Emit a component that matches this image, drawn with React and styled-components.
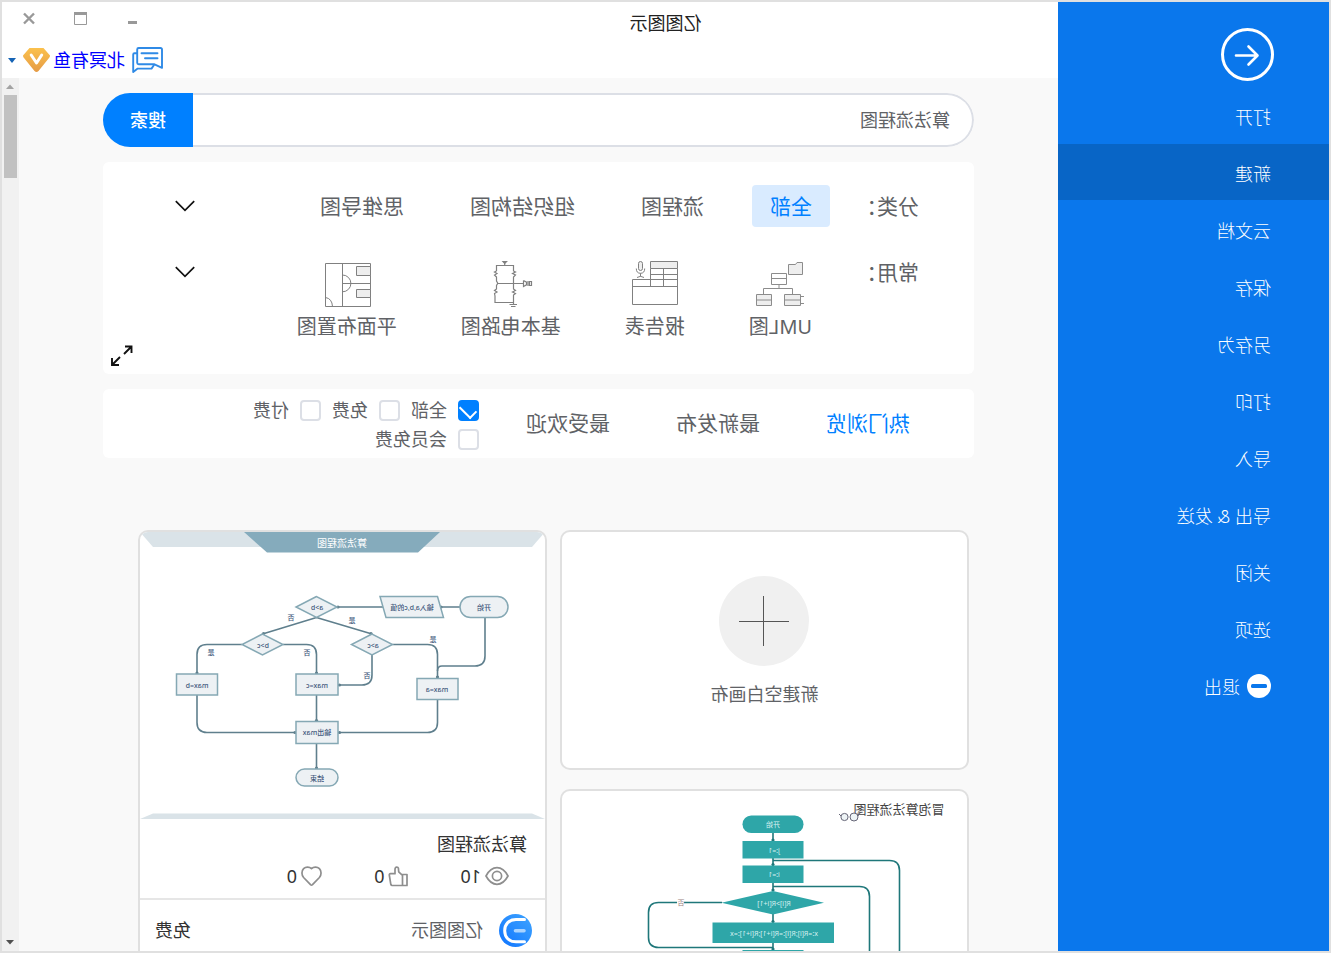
import React, { useState } from "react";
import styled, { createGlobalStyle, css } from "styled-components";

const GlobalStyle = createGlobalStyle`
  * {
    box-sizing: border-box;
  }
  body {
    margin: 0;
    font-family: "Noto Sans", "Noto Sans CJK SC", sans-serif;
    font-size: 18px;
    line-height: 24px;
    color: #606266;
  }
  button, input {
    font: inherit;
    color: inherit;
    margin: 0;
  }
  button {
    padding: 0;
    border: 0;
    background: none;
    cursor: pointer;
  }
  svg {
    display: block;
  }
`;

// the whole window is flipped horizontally
const Window = styled.div`
  display: flex;
  height: 100vh;
  border: 2px solid #e0e0e0;
  background: #ffffff;
  overflow: hidden;
  transform: scaleX(-1);
`;

/* ---------- sidebar ---------- */

const Sidebar = styled.aside`
  flex: 0 0 271px;
  padding-top: 26px;
  background: #0a77ec;
  color: #ffffff;
`;

const BackButton = styled.button`
  display: block;
  margin: 0 0 6px 55px;
`;

const Menu = styled.nav`
  display: flex;
  flex-direction: column;
  gap: 1px;
`;

const MenuItem = styled.button`
  display: flex;
  align-items: center;
  gap: 7px;
  width: 100%;
  height: 56px;
  padding: 4px 0 0 58px;
  color: #ffffff;
  font-weight: 300;
  background: ${(props) => (props.$active ? "#0865c6" : "transparent")};
`;

/* ---------- header ---------- */

const Main = styled.div`
  flex: 1;
  min-width: 0;
  display: flex;
  flex-direction: column;
`;

const TitleBar = styled.header`
  display: grid;
  grid-template-columns: 1fr 271px;
  height: 36px;
`;

const Title = styled.h1`
  margin: 0;
  padding-top: 9px;
  font-size: 18px;
  font-weight: 400;
  line-height: 24px;
  text-align: center;
  color: #222222;
`;

const WindowButtons = styled.div`
  display: flex;
  justify-content: flex-end;
  align-items: center;
  padding: 0 1px 3px 0;
`;

const WindowButton = styled.button`
  display: flex;
  justify-content: center;
  width: 52px;
`;

const UserBar = styled.div`
  display: flex;
  align-items: center;
  justify-content: flex-end;
  gap: 7px;
  height: 40px;
  padding: 4px 6px 0 0;
`;

const UserLink = styled.a`
  display: flex;
  align-items: center;
  gap: 3px;
  color: #0000ff;
  text-decoration: none;
`;

/* ---------- body ---------- */

const Body = styled.div`
  flex: 1;
  min-height: 0;
  display: flex;
  background: #f9f9f9;
`;

const Scroller = styled.main`
  flex: 1;
  min-width: 0;
  overflow-y: auto;
  scrollbar-width: none;
  padding: 15px 84px 0;
`;

const ScrollBar = styled.div`
  display: flex;
  flex-direction: column;
  align-items: center;
  width: 17px;
  background: #f1f1f1;
`;

const ScrollArrow = styled.button`
  display: flex;
  align-items: center;
  justify-content: center;
  width: 17px;
  height: 17px;
`;

const ScrollTrack = styled.div`
  flex: 1;
`;

const ScrollThumb = styled.div`
  width: 13px;
  height: 83px;
  background: #c1c1c1;
`;

const SearchForm = styled.form`
  display: flex;
  height: 54px;
  border-radius: 27px;
  overflow: hidden;
`;

const SearchInput = styled.input`
  flex: 1;
  min-width: 0;
  padding: 0 22px;
  border: 2px solid #dcdfe6;
  border-right: 0;
  border-radius: 27px 0 0 27px;
  background: #ffffff;
  outline: none;
`;

const SearchButton = styled.button`
  width: 90px;
  color: #ffffff;
  font-weight: 500;
  background: #0080ff;
`;

const Panel = styled.section`
  margin-top: 15px;
  border-radius: 6px;
  background: #ffffff;
`;

const FilterPanel = styled(Panel)`
  padding: 23px 0 8px 55px;
`;

const FilterRow = styled.div`
  display: flex;
  align-items: ${(props) => (props.$top ? "flex-start" : "center")};
  margin-bottom: ${(props) => (props.$top ? "5px" : "33px")};
`;

const FilterLabel = styled.span`
  width: 89px;
  font-size: 21px;
  white-space: nowrap;
`;

const FilterList = styled.div`
  flex: 1;
  display: flex;
  gap: ${(props) => props.$gap};
`;

const Chip = styled.button`
  height: 42px;
  padding: 0 18px;
  border-radius: 4px;
  font-size: 21px;
  ${(props) =>
    props.$active &&
    css`
      color: #0080ff;
      background: #d9ebff;
    `}
`;

const Shortcut = styled.button`
  display: flex;
  flex-direction: column;
  align-items: center;
  gap: 6px;
  padding: 0 18px;
  font-size: 20px;
  line-height: 26px;
`;

const MoreButton = styled.button`
  margin-right: 72px;
  padding: 6px 0;
`;

const ExpandRow = styled.div`
  display: flex;
  justify-content: flex-end;
  padding-right: 8px;
`;

const SortPanel = styled(Panel)`
  display: flex;
  align-items: center;
  height: 69px;
  padding-left: 64px;
`;

const SortTabs = styled.div`
  display: flex;
  gap: 66px;
  padding-bottom: 2px;
`;

const SortTab = styled.button`
  font-size: 21px;
  color: ${(props) => (props.$active ? "#0080ff" : "inherit")};
`;

const Checks = styled.div`
  display: flex;
  flex-wrap: wrap;
  gap: 8px 11px;
  width: 236px;
  margin-left: 47px;
  padding-top: 2px;
`;

const CheckLabel = styled.label`
  display: flex;
  align-items: center;
  gap: 11px;
  height: 21px;
`;

const CheckBox = styled.input`
  appearance: none;
  display: grid;
  place-items: center;
  width: 21px;
  height: 21px;
  border: 2px solid #dcdfe6;
  border-radius: 4px;
  background: #ffffff;

  &:checked {
    border-color: #0080ff;
    background: #0080ff;
  }
  &:checked::after {
    content: "";
    width: 8px;
    height: 14px;
    margin-bottom: 5px;
    border: solid #ffffff;
    border-width: 0 2px 2px 0;
    transform: rotate(45deg);
  }
`;

/* ---------- templates ---------- */

const Templates = styled.div`
  display: grid;
  grid-template-columns: 1fr 1fr;
  align-items: start;
  gap: 13px;
  margin-top: 72px;
  padding: 0 35px 0 5px;
`;

const Column = styled.div`
  display: flex;
  flex-direction: column;
  gap: 19px;
`;

const Card = styled.article`
  border: 2px solid #e0e0e0;
  border-radius: 10px;
  background: #ffffff;
  overflow: hidden;
`;

const BlankCard = styled.button`
  display: flex;
  flex-direction: column;
  align-items: center;
  gap: 16px;
  height: 240px;
  padding-top: 44px;
  border: 2px solid #e0e0e0;
  border-radius: 10px;
  background: #ffffff;
`;

const PlusCircle = styled.span`
  display: flex;
  align-items: center;
  justify-content: center;
  width: 90px;
  height: 90px;
  border-radius: 50%;
  background: #f0f0f0;
`;

const CardInfo = styled.div`
  padding: 13px 18px 10px;
  border-bottom: 2px solid #e6e6e6;
  color: #333333;
`;

const CardTitle = styled.h2`
  margin: 0 0 8px;
  font-size: 18px;
  font-weight: 400;
  line-height: 24px;
`;

const Stats = styled.div`
  display: flex;
  gap: 52px;
  padding-left: 18px;
`;

const Stat = styled.span`
  display: flex;
  align-items: center;
  gap: 4px;
  height: 24px;
`;

const CardFooter = styled.div`
  display: flex;
  align-items: center;
  gap: 16px;
  height: 60px;
  padding: 0 15px 0 13px;
`;

const Price = styled.span`
  margin-left: auto;
  color: #333333;
`;

const menu = [
  "打开",
  "新建",
  "云文档",
  "保存",
  "另存为",
  "打印",
  "导入",
  "导出 & 发送",
  "关闭",
  "选项",
  "退出",
];
const categories = ["全部", "流程图", "组织结构图", "思维导图"];
const sorts = ["热门浏览", "最新发布", "最受欢迎"];
const prices = ["全部", "免费", "付费", "会员免费"];

/* ---------- icons ---------- */

const BackIcon = () => (
  <svg width="53" height="53" fill="none" stroke="#fff">
    <circle cx="26.5" cy="26.5" r="25" strokeWidth="3" />
    <path
      d="M38 27.5H17M25.5 18.5L16.5 27.5L25.5 36.5"
      strokeWidth="2.6"
      strokeLinecap="round"
      strokeLinejoin="round"
    />
  </svg>
);

const ExitIcon = () => (
  <svg width="24" height="26">
    <circle cx="12" cy="12" r="12" fill="#fff" />
    <rect x="4" y="10" width="16" height="4" rx="1.5" fill="#0a77ec" />
  </svg>
);

const ChatIcon = () => (
  <svg
    width="31"
    height="27"
    fill="none"
    stroke="#2f8ae6"
    strokeWidth="1.9"
    strokeLinejoin="round"
    strokeLinecap="round"
  >
    <path d="M2.5 1H24.3Q25.8 1 25.8 2.5V15.7Q25.8 17.2 24.3 17.2H9L1 20.8V2.5Q1 1 2.5 1Z" />
    <path d="M5.5 6.3H21.5M5.5 11.2H18" />
    <path d="M26 6.3H28.5Q29.8 6.3 29.8 7.6V25L25.3 21.6H11.5L9 18" />
  </svg>
);

const VipIcon = () => (
  <svg width="27" height="25">
    <defs>
      <linearGradient id="vip" x1="0" y1="0" x2="0" y2="1">
        <stop offset="0" stopColor="#fbc14d" />
        <stop offset="1" stopColor="#e59b45" />
      </linearGradient>
    </defs>
    <path
      d="M6.5 0H20.5L27 7.5Q27 9 26 10L15.5 23Q13.5 25 11.5 23L1 10Q0 9 0 7.5Z"
      fill="url(#vip)"
    />
    <path
      d="M8.3 7L13.5 15L18.8 7"
      fill="none"
      stroke="#fff"
      strokeWidth="3"
      strokeLinecap="round"
      strokeLinejoin="round"
    />
  </svg>
);

const Chevron = () => (
  <svg width="20" height="12" fill="none" stroke="#111" strokeWidth="1.7">
    <path d="M0.8 1.2L10 10.4L19.2 1.2" />
  </svg>
);

const ExpandIcon = () => (
  <svg width="22" height="21" fill="none" stroke="#111" strokeWidth="1.9">
    <path d="M1.5 8V1.5H8M1.5 1.5L9 9M21 13V20H14M21 20L13 12" />
  </svg>
);

const UmlIcon = () => (
  <svg width="50" height="48" fill="none" stroke="#8c8c8c">
    <path d="M2.5 14.5V2.5H8L9.5 4.5H16.5V14.5Z" fill="#eee" />
    <path d="M18.5 13.5H33.5V24.5H18.5ZM18.5 18.5H33.5" />
    <path d="M26 24.5V28.5M12.5 34.5V28.5H41.5V34.5M1 36.5H4.5M1 43.5H4.5" />
    <path d="M4.5 34.5H20.5V45.5H4.5ZM33.5 34.5H48.5V45.5H33.5Z" fill="#eee" />
    <path d="M4.5 40H20.5M33.5 40H48.5" />
  </svg>
);

const ReportIcon = () => (
  <svg width="50" height="48" fill="none" stroke="#808080">
    <path d="M2.5 1.5H29.5V8.5H2.5Z" fill="#eee" />
    <path d="M2.5 8.5V26.5M29.5 8.5V26.5M16.5 8.5V26.5M2.5 14.5H29.5" />
    <path d="M2.5 19.5H47.5V44.5H2.5ZM2.5 26.5H47.5" />
    <rect x="37.5" y="1.5" width="4" height="9" rx="2" fill="#eee" />
    <path d="M35.3 8.5Q35.3 13.3 39.5 13.3Q43.7 13.3 43.7 8.5M39.5 13.3V16.5M36 17.5L39.5 16.3L43 17.5" />
  </svg>
);

const CircuitIcon = () => (
  <svg width="50" height="48" fill="none" stroke="#808080" strokeWidth="1.2">
    <path d="M29.5 1.7H33L31.3 3.5Z" fill="#808080" />
    <path d="M31.3 3V5.5M39.5 11V5.5H22.5V11L20.5 12L23.5 13.5L20.5 15L22.5 17V29L20.5 30.5L23.5 32L20.5 33.5L22.5 35V44" />
    <path d="M39.5 11L41.5 12L39 13.5L41.5 15L39.5 17V21L38.2 23.3L39.5 25.5V29L41.5 30.5L39 32L41.5 33.5L41 36V42.5H22.5" />
    <path d="M39 23.5H12.5M12.5 20.5V26.5L9.5 24.8V22.2L12.5 20.5M8 21V26M4.5 21.5V25.5H6.5V21.5ZM19 44.5H26.5M20.5 46.5H25" />
  </svg>
);

const FloorIcon = () => (
  <svg width="50" height="48" fill="none" stroke="#808080">
    <path d="M1.5 3.5H46.5V46.5H1.5ZM29.5 3.5V46.5M1.5 23.5H29.5" />
    <path d="M1.5 6.5H15.5V15.5H1.5ZM1.5 29.5H15.5V37.5H1.5Z" fill="#eee" />
    <path d="M29.5 15A8.3 8.3 0 0 0 29.5 31.8M46.5 37.5Q40 38.5 39.5 46.5" />
  </svg>
);

const EyeIcon = () => (
  <svg width="24" height="20" fill="none" stroke="#8e8e8e" strokeWidth="1.7">
    <path d="M1 10Q5.5 1.7 12 1.7T23 10Q18.5 18.3 12 18.3T1 10Z" />
    <circle cx="12" cy="10" r="4.6" />
  </svg>
);

const LikeIcon = () => (
  <svg
    width="20"
    height="21"
    fill="none"
    stroke="#8e8e8e"
    strokeWidth="1.7"
    strokeLinejoin="round"
  >
    <path d="M1 8.5H5.5V19.5H1ZM5.5 9.3L9.3 5.8L9.6 2.3Q9.9 1 11.2 1Q13 1.3 13 3.5V7.7H17.5Q18.8 7.8 18.7 9L17.2 18.3Q16.9 19.5 15.8 19.5H5.5" />
  </svg>
);

const HeartIcon = () => (
  <svg
    width="21"
    height="20"
    fill="none"
    stroke="#8e8e8e"
    strokeWidth="1.7"
    strokeLinejoin="round"
  >
    <path d="M10.5 2.6C8.5 0.7 4.8 0.4 2.6 2.7C0.4 5 0.4 8.8 2.6 11.5L9.5 18.6Q10.5 19.5 11.5 18.6L18.4 11.5C20.6 8.8 20.6 5 18.4 2.7C16.2 0.4 12.5 0.7 10.5 2.6Z" />
  </svg>
);

const EdrawLogo = () => (
  <svg width="33" height="33" fill="none" strokeLinecap="round">
    <defs>
      <linearGradient id="edraw" x1="0" y1="0" x2="1" y2="1">
        <stop offset="0" stopColor="#3fa5ff" />
        <stop offset="1" stopColor="#0f74ff" />
      </linearGradient>
    </defs>
    <circle cx="16.5" cy="16.5" r="16.5" fill="url(#edraw)" />
    <path
      d="M7.5 5.5H16C23 5.5 27.3 10.2 27.3 16.7S23 27.8 16 27.8H7.5"
      stroke="#fff"
      strokeWidth="3"
    />
    <path d="M8 16.8H16.5" stroke="#a9d3ff" strokeWidth="3.6" />
  </svg>
);

const shortcuts = [
  { text: "UML图", icon: <UmlIcon /> },
  { text: "报告表", icon: <ReportIcon /> },
  { text: "基本电路图", icon: <CircuitIcon /> },
  { text: "平面布置图", icon: <FloorIcon /> },
];

/* ---------- thumbnails ---------- */

const Thumb = styled.svg`
  width: 100%;
  height: auto;

  text {
    font-size: 7px;
    text-anchor: middle;
    dominant-baseline: central;
  }
`;

const ThumbTitle = styled.text`
  && {
    font-size: ${(props) => props.$size};
  }
`;

const AlgorithmThumb = () => (
  <Thumb viewBox="0 0 405 287">
    <path d="M0 0H405L392 15H13Z" fill="#dae3e8" />
    <path d="M105 0H301L278 20.5H127Z" fill="#85abbc" />
    <ThumbTitle x="203" y="11" fill="#fff" $size="10px">
      算法流程图
    </ThumbTitle>
    <path d="M0 287L13 281.5H392L405 287Z" fill="#dae3e8" />
    <g fill="none" stroke="#5f7f8d" strokeWidth="1.6">
      <path d="M85 75H104M162 75H208" />
      <path d="M228.5 85.5L282.5 102M228.5 85.5L173 102" />
      <path d="M60 85V124Q60 134 70 134H103Q107.5 134 107.5 139" />
      <path d="M152.5 112.5H117.5Q107.5 112.5 107.5 122.5V146" />
      <path d="M173 123V143Q173 153 183 153H206.5" />
      <path d="M262 112.5H238.5Q228.5 112.5 228.5 122.5V142" />
      <path d="M303 112.5H338Q348 112.5 348 122.5V142" />
      <path d="M348 163V190.5Q348 200.5 338 200.5H249" />
      <path d="M107.5 167V190.5Q107.5 200.5 117.5 200.5H206.5" />
      <path d="M228.5 163V189.5M228.5 212V237" />
    </g>
    <g fill="#5f7f8d">
      <circle cx="104" cy="75" r="1.6" />
      <circle cx="207" cy="75" r="1.6" />
      <circle cx="281.5" cy="101.5" r="1.6" />
      <circle cx="174" cy="101.5" r="1.6" />
      <circle cx="107.5" cy="145" r="1.6" />
      <circle cx="205.5" cy="153" r="1.6" />
      <circle cx="228.5" cy="141" r="1.6" />
      <circle cx="348" cy="141" r="1.6" />
      <circle cx="250" cy="200.5" r="1.6" />
      <circle cx="205.5" cy="200.5" r="1.6" />
      <circle cx="228.5" cy="188.5" r="1.6" />
      <circle cx="228.5" cy="236" r="1.6" />
    </g>
    <g fill="#edf1f4" stroke="#85a8b4" strokeWidth="1.5">
      <rect x="37" y="64.5" width="48" height="21" rx="10.5" />
      <path d="M107.5 64.5H165L159 85.5H101.5Z" />
      <path d="M228.5 64.5L249 75L228.5 85.5L208 75Z" />
      <path d="M173 102L193.5 112.5L173 123L152.5 112.5Z" />
      <path d="M282.5 102L303 112.5L282.5 123L262 112.5Z" />
      <rect x="327.5" y="142" width="41" height="21" />
      <rect x="207" y="142" width="42" height="21" />
      <rect x="87" y="146.5" width="41" height="21" />
      <rect x="207" y="189.5" width="42" height="22" />
      <rect x="207" y="237" width="42" height="17" rx="8.5" />
    </g>
    <g fill="#3f587c" fontWeight="500">
      <text x="61" y="75">开始</text>
      <text x="133" y="75">输入a,b,c的值</text>
      <text x="228" y="75">a&gt;b</text>
      <text x="172" y="113">a&gt;c</text>
      <text x="282" y="113">b&gt;c</text>
      <text x="254" y="85">否</text>
      <text x="193" y="88">是</text>
      <text x="112" y="107">是</text>
      <text x="334" y="120">是</text>
      <text x="238" y="120">否</text>
      <text x="178" y="143">否</text>
      <text x="348" y="153">max=b</text>
      <text x="228" y="153">max=c</text>
      <text x="108" y="157">max=a</text>
      <text x="228" y="200">输出max</text>
      <text x="228" y="246">结束</text>
    </g>
  </Thumb>
);

const BubbleSortThumb = () => (
  <Thumb viewBox="0 0 405 287">
    <ThumbTitle x="68" y="18" fill="#444" $size="13px">
      冒泡算法流程图
    </ThumbTitle>
    <g fill="#eef4f6" stroke="#667" strokeWidth="1">
      <circle cx="113" cy="26" r="4" />
      <circle cx="122.5" cy="26" r="3.6" />
      <path d="M109 25L107 22M126 25L128 23" />
    </g>
    <g fill="none" stroke="#1f777a" strokeWidth="1.6">
      <path d="M194 42V50M194 67V75M194 92V100M194 123V131M194 151V160" />
      <path d="M194 69.5H77.5Q67.5 69.5 67.5 79.5V287" />
      <path d="M194 95.5H107.5Q97.5 95.5 97.5 105.5V287" />
      <path d="M245 111.5H308.5Q318.5 111.5 318.5 121.5V146.5Q318.5 156.5 308.5 156.5H194" />
    </g>
    <g fill="#1f777a">
      <circle cx="194" cy="49" r="1.6" />
      <circle cx="194" cy="73.5" r="1.6" />
      <circle cx="194" cy="99" r="1.6" />
      <circle cx="194" cy="130.5" r="1.6" />
      <circle cx="194" cy="158" r="1.6" />
    </g>
    <g fill="#2ea6a8">
      <rect x="163.5" y="24.5" width="61" height="17.5" rx="8.7" />
      <rect x="163.5" y="50" width="61" height="17.5" />
      <rect x="163.5" y="74.5" width="61" height="17.5" />
      <path d="M143 111.7L194 100L245.5 111.7L194 123.5Z" />
      <rect x="133" y="131.5" width="121.5" height="20.5" />
      <rect x="163.5" y="159" width="61" height="17.5" />
    </g>
    <rect x="283" y="108" width="7" height="7" fill="#fff" />
    <text x="286" y="111.5" fill="#9a7f7f">
      否
    </text>
    <g fill="#d5f0f0">
      <text x="194" y="33">开始</text>
      <text x="193" y="59">j:=1</text>
      <text x="193" y="83">i:=1</text>
      <text x="193" y="112">R[i]&gt;R[i+1]</text>
      <text x="193" y="142">x:=R[i];R[i]:=R[i+1];R[i+1]:=x</text>
    </g>
  </Thumb>
);

const App = () => {
  const [active, setActive] = useState("新建");
  const [category, setCategory] = useState("全部");
  const [sort, setSort] = useState("热门浏览");

  return (
    <>
      <GlobalStyle />
      <Window>
        <Sidebar>
          <BackButton aria-label="返回">
            <BackIcon />
          </BackButton>
          <Menu>
            {menu.map((m) => (
              <MenuItem
                key={m}
                $active={m === active}
                onClick={() => setActive(m)}
              >
                {m === "退出" && <ExitIcon />}
                {m}
              </MenuItem>
            ))}
          </Menu>
        </Sidebar>

        <Main>
          <TitleBar>
            <Title>亿图图示</Title>
            <WindowButtons>
              <WindowButton aria-label="最小化">
                <svg width="9" height="14">
                  <rect y="9" width="9" height="3" fill="#999" />
                </svg>
              </WindowButton>
              <WindowButton aria-label="最大化">
                <svg width="13" height="14" fill="none" stroke="#999">
                  <path d="M0.5 1V12.5H12.5V1" />
                  <path d="M0 1.5H13" strokeWidth="3" />
                </svg>
              </WindowButton>
              <WindowButton aria-label="关闭窗口">
                <svg width="12" height="13" stroke="#999" strokeWidth="2.4">
                  <path d="M1 1.5L11 11.5M11 1.5L1 11.5" />
                </svg>
              </WindowButton>
            </WindowButtons>
          </TitleBar>
          <UserBar>
            <button aria-label="消息">
              <ChatIcon />
            </button>
            <UserLink href="#user">
              北冥有鱼
              <VipIcon />
            </UserLink>
            <button aria-label="账户菜单">
              <svg width="8" height="5">
                <path d="M0 0H8L4 5Z" fill="#1563b5" />
              </svg>
            </button>
          </UserBar>

          <Body>
            <Scroller>
              <SearchForm onSubmit={(e) => e.preventDefault()}>
                <SearchInput aria-label="搜索模板" defaultValue="算法流程图" />
                <SearchButton type="submit">搜索</SearchButton>
              </SearchForm>

              <FilterPanel>
                <FilterRow>
                  <FilterLabel>分类：</FilterLabel>
                  <FilterList $gap="30px">
                    {categories.map((c) => (
                      <Chip
                        key={c}
                        $active={c === category}
                        onClick={() => setCategory(c)}
                      >
                        {c}
                      </Chip>
                    ))}
                  </FilterList>
                  <MoreButton aria-label="更多分类">
                    <Chevron />
                  </MoreButton>
                </FilterRow>
                <FilterRow $top>
                  <FilterLabel>常用：</FilterLabel>
                  <FilterList $gap="28px">
                    {shortcuts.map((s) => (
                      <Shortcut key={s.text}>
                        {s.icon}
                        {s.text}
                      </Shortcut>
                    ))}
                  </FilterList>
                  <MoreButton aria-label="更多常用">
                    <Chevron />
                  </MoreButton>
                </FilterRow>
                <ExpandRow>
                  <button aria-label="展开">
                    <ExpandIcon />
                  </button>
                </ExpandRow>
              </FilterPanel>

              <SortPanel>
                <SortTabs>
                  {sorts.map((s) => (
                    <SortTab
                      key={s}
                      $active={s === sort}
                      onClick={() => setSort(s)}
                    >
                      {s}
                    </SortTab>
                  ))}
                </SortTabs>
                <Checks>
                  {prices.map((p) => (
                    <CheckLabel key={p}>
                      <CheckBox type="checkbox" defaultChecked={p === "全部"} />
                      {p}
                    </CheckLabel>
                  ))}
                </Checks>
              </SortPanel>

              <Templates>
                <Column>
                  <BlankCard>
                    <PlusCircle>
                      <svg width="50" height="50" stroke="#555">
                        <path d="M0 25.5H50M25.5 0V50" />
                      </svg>
                    </PlusCircle>
                    新建空白画布
                  </BlankCard>
                  <Card>
                    <BubbleSortThumb />
                  </Card>
                </Column>
                <Column>
                  <Card>
                    <AlgorithmThumb />
                    <CardInfo>
                      <CardTitle>算法流程图</CardTitle>
                      <Stats>
                        <Stat>
                          <EyeIcon />
                          10
                        </Stat>
                        <Stat>
                          <LikeIcon />0
                        </Stat>
                        <Stat>
                          <HeartIcon />0
                        </Stat>
                      </Stats>
                    </CardInfo>
                    <CardFooter>
                      <EdrawLogo />
                      亿图图示
                      <Price>免费</Price>
                    </CardFooter>
                  </Card>
                </Column>
              </Templates>
            </Scroller>
            <ScrollBar>
              <ScrollArrow aria-label="向上滚动">
                <svg width="8" height="5">
                  <path d="M0 5L4 0.5L8 5Z" fill="#a3a3a3" />
                </svg>
              </ScrollArrow>
              <ScrollTrack>
                <ScrollThumb />
              </ScrollTrack>
              <ScrollArrow aria-label="向下滚动">
                <svg width="8" height="5">
                  <path d="M0 0L4 4.5L8 0Z" fill="#505050" />
                </svg>
              </ScrollArrow>
            </ScrollBar>
          </Body>
        </Main>
      </Window>
    </>
  );
};

export default App;
